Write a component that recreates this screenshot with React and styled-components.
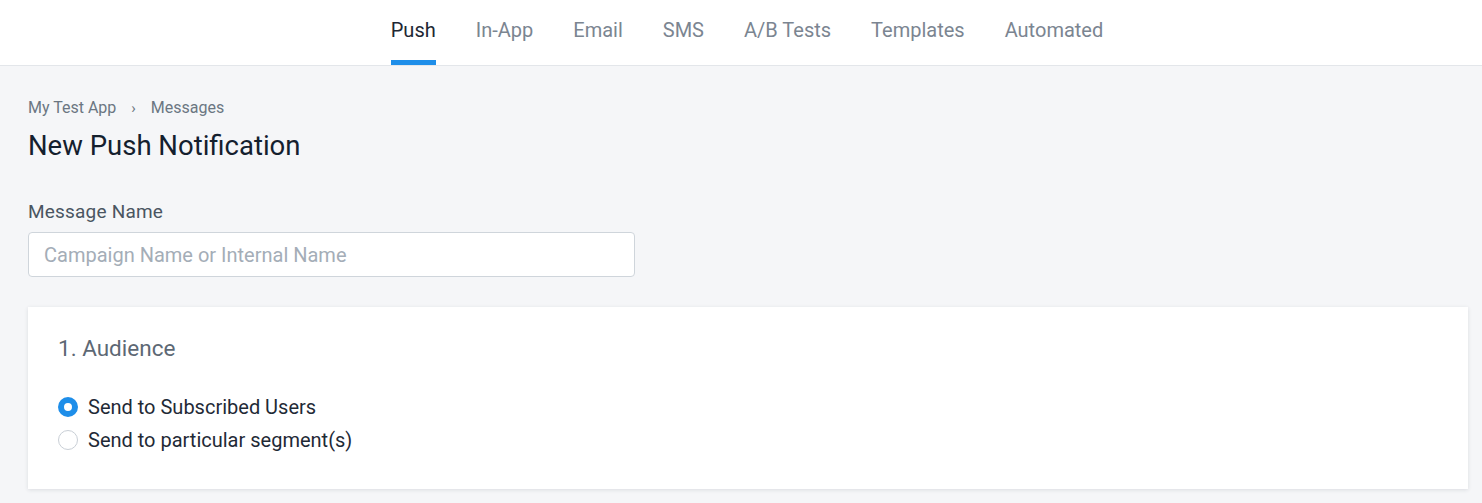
import React from "react";
import styled, { createGlobalStyle } from "styled-components";

const GlobalStyle = createGlobalStyle`
  html, body {
    margin: 0;
    padding: 0;
    background: #f5f6f8;
    font-family: Roboto, "Noto Sans", Arial, sans-serif;
  }
  * { box-sizing: border-box; }
`;

const Header = styled.header`
  height: 66px;
  background: #fff;
  border-bottom: 1px solid #e3e6ea;
  display: flex;
  justify-content: center;
  padding-left: 12px;
`;

const Nav = styled.nav`
  display: flex;
  gap: 40px;
`;

const Tab = styled.a`
  position: relative;
  display: flex;
  align-items: center;
  height: 100%;
  padding-bottom: 6px;
  font-size: 20px;
  color: ${({ active }) => (active ? "#1d2733" : "#7b8591")};
  cursor: pointer;
  &::after {
    content: "";
    position: absolute;
    left: 0;
    right: 0;
    bottom: 0;
    height: 5px;
    background: ${({ active }) => (active ? "#1e8ee9" : "transparent")};
  }
`;

const Main = styled.main`
  padding: 32px 14px 14px 28px;
`;

const Breadcrumb = styled.div`
  display: flex;
  align-items: center;
  gap: 15px;
  font-size: 16px;
  line-height: 20px;
  color: #6b7682;
  .sep {
    font-size: 15px;
  }
`;

const Title = styled.h1`
  margin: 11px 0 0;
  font-size: 27.5px;
  line-height: 34px;
  font-weight: 400;
  color: #14202e;
`;

const Field = styled.div`
  margin-top: 37px;
  display: flex;
  flex-direction: column;
  gap: 8px;
`;

const Label = styled.label`
  font-size: 19px;
  line-height: 24px;
  letter-spacing: 0.2px;
  color: #4a5561;
`;

const Input = styled.input`
  width: 607px;
  height: 45px;
  border: 1px solid #cfd5db;
  border-radius: 4px;
  padding: 0 15px;
  font-family: inherit;
  font-size: 20px;
  color: #1f2a36;
  background: #fff;
  outline: none;
  &::placeholder {
    color: #a4adb7;
  }
`;

const Card = styled.section`
  margin-top: 30px;
  background: #fff;
  padding: 27px 30px 36px;
  box-shadow: 0 1px 4px rgba(30, 40, 60, 0.12);
`;

const CardTitle = styled.h2`
  margin: 0 0 32px;
  font-size: 22.5px;
  line-height: 28px;
  font-weight: 400;
  color: #5d6874;
`;

const Options = styled.div`
  display: flex;
  flex-direction: column;
  gap: 7px;
`;

const Option = styled.label`
  display: flex;
  align-items: center;
  gap: 10px;
  font-size: 20px;
  line-height: 26px;
  color: #1f2a36;
  cursor: pointer;
`;

const Radio = styled.span`
  width: 20px;
  height: 20px;
  border-radius: 50%;
  flex-shrink: 0;
  border: ${({ checked }) => (checked ? "6px solid #1e8ee9" : "1px solid #c9cfd6")};
  background: #fff;
`;

const tabs = ["Push", "In-App", "Email", "SMS", "A/B Tests", "Templates", "Automated"];

export default function App() {
  return (
    <>
      <GlobalStyle />
      <Header>
        <Nav>
          {tabs.map((t) => (
            <Tab key={t} active={t === "Push" ? 1 : 0}>
              {t}
            </Tab>
          ))}
        </Nav>
      </Header>
      <Main>
        <Breadcrumb>
          <span>My Test App</span>
          <span className="sep">›</span>
          <span>Messages</span>
        </Breadcrumb>
        <Title>New Push Notification</Title>
        <Field>
          <Label>Message Name</Label>
          <Input placeholder="Campaign Name or Internal Name" />
        </Field>
        <Card>
          <CardTitle>1. Audience</CardTitle>
          <Options>
            <Option>
              <Radio checked />
              Send to Subscribed Users
            </Option>
            <Option>
              <Radio />
              Send to particular segment(s)
            </Option>
          </Options>
        </Card>
      </Main>
    </>
  );
}
